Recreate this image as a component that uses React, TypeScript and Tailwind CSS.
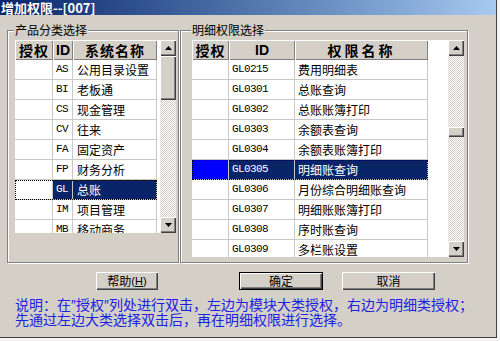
import React from "react";

const leftRows: [string, string][] = [
  ["AS", "公用目录设置"],
  ["BI", "老板通"],
  ["CS", "现金管理"],
  ["CV", "往来"],
  ["FA", "固定资产"],
  ["FP", "财务分析"],
  ["GL", "总账"],
  ["IM", "项目管理"],
  ["MB", "移动商务"],
];

const rightRows: [string, string][] = [
  ["GL0215", "费用明细表"],
  ["GL0301", "总账查询"],
  ["GL0302", "总账账簿打印"],
  ["GL0303", "余额表查询"],
  ["GL0304", "余额表账簿打印"],
  ["GL0305", "明细账查询"],
  ["GL0306", "月份综合明细账查询"],
  ["GL0307", "明细账账簿打印"],
  ["GL0308", "序时账查询"],
  ["GL0309", "多栏账设置"],
];

const raised =
  "bg-[#d4d0c8] shadow-[inset_1px_1px_0_#ffffff,inset_-1px_-1px_0_#404040,inset_-2px_-2px_0_#808080]";

function Arrow({ up }: { up: boolean }) {
  return (
    <svg width="7" height="4" viewBox="0 0 7 4">
      {up ? <polygon points="0,4 7,4 3.5,0" fill="#000" /> : <polygon points="0,0 7,0 3.5,4" fill="#000" />}
    </svg>
  );
}

function ScrollBar({ thumbTop, thumbH }: { thumbTop: number; thumbH: number }) {
  return (
    <div className="w-[16px] h-full flex flex-col [background:repeating-conic-gradient(#ffffff_0%_25%,#d4d0c8_0%_50%)_0_0/2px_2px]">
      <div className={`h-[16px] w-[16px] flex items-center justify-center ${raised}`}>
        <Arrow up />
      </div>
      <div className="flex-1 relative">
        <div className={`absolute left-0 w-[16px] ${raised}`} style={{ top: thumbTop, height: thumbH }} />
      </div>
      <div className={`h-[16px] w-[16px] flex items-center justify-center ${raised}`}>
        <Arrow up={false} />
      </div>
    </div>
  );
}

const headCell =
  "h-[20px] flex items-center justify-center bg-[#d4d0c8] shadow-[inset_1px_1px_0_#ffffff,inset_-1px_-1px_0_#808080] font-bold text-[14px] tracking-[1px] text-black";
const bodyCell = "h-[20px] border-r border-b border-[#c8c8c8] flex items-center";
const mono = "font-['Liberation_Mono',monospace] text-[11px] tracking-[-0.6px]";

export default function App() {
  return (
    <div className="w-[500px] h-[341px] bg-[#f4f4f4] font-['Noto_Sans_CJK_SC',sans-serif] text-black overflow-hidden">
      <div className="w-[497px] h-[338px] bg-[#d4d0c8] border-r border-b border-[#404040] flex flex-col">
        {/* Title bar */}
        <div className="h-[15px] bg-linear-to-r from-[#0a246a] to-[#a6caf0] text-white font-bold text-[13px] leading-[15px] pl-[1px] whitespace-nowrap">
          增加权限--[007]
        </div>

        {/* Group boxes */}
        <div className="flex mt-[15px] pl-[7px] gap-[1px]">
          {/* Left group */}
          <div className="relative w-[172px] h-[233px] border border-[#808080] shadow-[inset_1px_1px_0_#ffffff,1px_1px_0_#ffffff] pl-[7px] pt-[9px]">
            <span className="absolute -top-[8px] left-[6px] bg-[#d4d0c8] px-[1px] text-[12px] leading-[14px]">
              产品分类选择
            </span>
            <div className="flex w-[161px] h-[193px]">
              <div className="w-[145px] h-full bg-white overflow-hidden flex flex-col">
                <div className="flex">
                  <div className={`${headCell} w-[38px]`}>授权</div>
                  <div className={`${headCell} w-[20px] font-['Liberation_Sans',sans-serif] tracking-normal`}>ID</div>
                  <div className={`${headCell} w-[84px]`}>系统名称</div>
                </div>
                {leftRows.map(([id, name]) => {
                  const sel = id === "GL";
                  return (
                    <div
                      key={id}
                      className={`flex w-[142px] shrink-0 ${sel ? "outline-1 outline-dotted outline-black -outline-offset-1" : ""}`}
                    >
                      <div className={`${bodyCell} w-[38px] bg-white`} />
                      <div
                        className={`${bodyCell} w-[20px] pl-[3px] ${mono} ${sel ? "bg-[#0a246a] text-white" : ""}`}
                      >
                        {id}
                      </div>
                      <div
                        className={`${bodyCell} w-[84px] pl-[4px] text-[12px] ${sel ? "bg-[#0a246a] text-white" : ""}`}
                      >
                        {name}
                      </div>
                    </div>
                  );
                })}
              </div>
              <ScrollBar thumbTop={0} thumbH={44} />
            </div>
          </div>

          {/* Right group */}
          <div className="relative w-[288px] h-[233px] border border-[#808080] shadow-[inset_1px_1px_0_#ffffff,1px_1px_0_#ffffff] pl-[11px] pt-[9px]">
            <span className="absolute -top-[8px] left-[10px] bg-[#d4d0c8] px-[1px] text-[12px] leading-[14px]">
              明细权限选择
            </span>
            <div className="flex w-[272px] h-[217px]">
              <div className="w-[256px] h-full bg-white overflow-hidden flex flex-col">
                <div className="flex">
                  <div className={`${headCell} w-[37px]`}>授权</div>
                  <div className={`${headCell} w-[66px] font-['Liberation_Sans',sans-serif] tracking-normal`}>ID</div>
                  <div className={`${headCell} w-[133px] tracking-[3px]`}>权限名称</div>
                </div>
                {rightRows.map(([id, name]) => {
                  const sel = id === "GL0305";
                  return (
                    <div
                      key={id}
                      className={`flex w-[236px] shrink-0 ${sel ? "outline-1 outline-dotted outline-black -outline-offset-1" : ""}`}
                    >
                      <div className={`${bodyCell} w-[37px] ${sel ? "bg-[#0000ff]" : "bg-white"}`} />
                      <div
                        className={`${bodyCell} w-[66px] pl-[3px] ${mono} ${sel ? "bg-[#0a246a] text-white" : ""}`}
                      >
                        {id}
                      </div>
                      <div
                        className={`${bodyCell} w-[133px] pl-[3px] text-[12px] ${sel ? "bg-[#0a246a] text-white" : ""}`}
                      >
                        {name}
                      </div>
                    </div>
                  );
                })}
              </div>
              <ScrollBar thumbTop={71} thumbH={10} />
            </div>
          </div>
        </div>

        {/* Buttons */}
        <div className="flex mt-[9px] h-[18px] text-[12px]">
          <button
            className={`ml-[96px] w-[62px] h-[18px] flex items-center justify-center leading-none ${raised}`}
          >
            帮助<span className="font-['Liberation_Sans',sans-serif] text-[11px]">(<u>H</u>)</span>
          </button>
          <button
            className="ml-[81px] w-[84px] h-[18px] flex items-center justify-center leading-none bg-[#d4d0c8] border border-black shadow-[inset_1px_1px_0_#ffffff,inset_-1px_-1px_0_#404040,inset_-2px_-2px_0_#808080]"
          >
            确定
          </button>
          <button
            className={`ml-[19px] w-[93px] h-[18px] flex items-center justify-center leading-none ${raised}`}
          >
            取消
          </button>
        </div>

        {/* Note */}
        <div className="mt-[7px] pl-[15px] text-[14px] text-[#2020e0] whitespace-nowrap flex flex-col">
          <div className="h-[15px] leading-[15px]">
            说明：在<span className="font-['Liberation_Sans',sans-serif] leading-none">″</span>授权<span className="font-['Liberation_Sans',sans-serif] leading-none">″</span>列处进行双击，左边为模块大类授权，右边为明细类授权；
          </div>
          <div className="h-[15px] leading-[15px]">先通过左边大类选择双击后，再在明细权限进行选择。</div>
        </div>
      </div>
    </div>
  );
}
